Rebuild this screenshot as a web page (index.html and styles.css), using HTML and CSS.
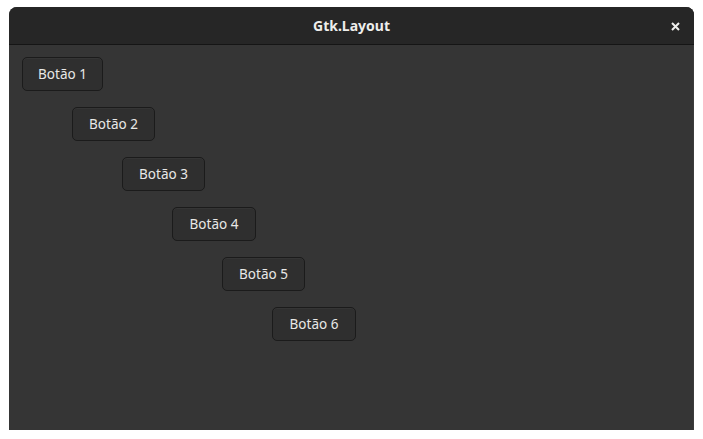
FILE: index.html
```html
<!DOCTYPE html>
<html>
<head>
<meta charset="utf-8">
<link rel="stylesheet" href="styles.css">
</head>
<body>
<div class="window">
  <div class="header">
    <div class="title">Gtk.Layout</div>
    <div class="close">
      <svg width="9" height="9" viewBox="0 0 9 9"><path d="M1 1L8 8M8 1L1 8" stroke="#eeeeec" stroke-width="2" stroke-linecap="butt"/></svg>
    </div>
  </div>
  <div class="layout">
    <button class="btn b1">Botão 1</button>
    <button class="btn b2">Botão 2</button>
    <button class="btn b3">Botão 3</button>
    <button class="btn b4">Botão 4</button>
    <button class="btn b5">Botão 5</button>
    <button class="btn b6">Botão 6</button>
  </div>
</div>
</body>
</html>
```
FILE: styles.css
```css
html, body { margin: 0; padding: 0; background: #ffffff; }
body { width: 703px; height: 439px; overflow: hidden; font-family: "Noto Sans", "Open Sans", sans-serif; }
.window {
  margin: 7px 0 0 9px;
  width: 685px;
  height: 423px;
  border-radius: 8px 8px 0 0;
  background: #353535;
  overflow: hidden;
  display: flex;
  flex-direction: column;
  box-shadow: inset -1px 0 0 #3c3c3c;
}
.header {
  height: 37px;
  background: #262626;
  border-bottom: 1px solid #151515;
  display: flex;
  align-items: center;
  justify-content: center;
  position: relative;
  flex-shrink: 0;
}
.title { color: #eeeeec; font-weight: bold; font-size: 14px; }
.close { position: absolute; right: 14px; top: 15px; width: 9px; height: 9px; line-height: 0; }
.layout { position: relative; flex: 1; }
.btn {
  position: absolute;
  height: 34px;
  box-sizing: border-box;
  background: #2f2f2f;
  border: 1px solid #1b1b1b;
  border-radius: 5px;
  color: #e8e8e6;
  font-family: "Noto Sans", "Open Sans", sans-serif;
  font-size: 13.5px;
  padding: 0;
  white-space: nowrap;
  text-align: center;
  box-shadow: inset 0 1px 0 rgba(255,255,255,0.03);
}
.b1 { left: 13px; top: 12px; width: 81px; }
.b2 { left: 63px; top: 62px; width: 83px; }
.b3 { left: 113px; top: 112px; width: 83px; }
.b4 { left: 163px; top: 162px; width: 84px; }
.b5 { left: 213px; top: 212px; width: 83px; }
.b6 { left: 263px; top: 262px; width: 84px; }
```
